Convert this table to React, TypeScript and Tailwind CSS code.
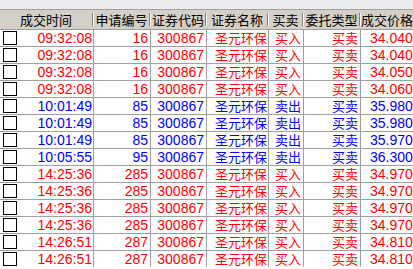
const rows = [
  { t: "09:32:08", no: "16", side: "买入", price: "34.0400", blue: false },
  { t: "09:32:08", no: "16", side: "买入", price: "34.0400", blue: false },
  { t: "09:32:08", no: "16", side: "买入", price: "34.0500", blue: false },
  { t: "09:32:08", no: "16", side: "买入", price: "34.0600", blue: false },
  { t: "10:01:49", no: "85", side: "卖出", price: "35.9800", blue: true },
  { t: "10:01:49", no: "85", side: "卖出", price: "35.9800", blue: true },
  { t: "10:01:49", no: "85", side: "卖出", price: "35.9700", blue: true },
  { t: "10:05:55", no: "95", side: "卖出", price: "36.3000", blue: true },
  { t: "14:25:36", no: "285", side: "买入", price: "34.9700", blue: false },
  { t: "14:25:36", no: "285", side: "买入", price: "34.9700", blue: false },
  { t: "14:25:36", no: "285", side: "买入", price: "34.9700", blue: false },
  { t: "14:25:36", no: "285", side: "买入", price: "34.9700", blue: false },
  { t: "14:26:51", no: "287", side: "买入", price: "34.8100", blue: false },
  { t: "14:26:51", no: "287", side: "买入", price: "34.8100", blue: false },
];

const headers = [
  { label: "成交时间", w: "w-[94px]" },
  { label: "申请编号", w: "w-[57px]" },
  { label: "证券代码", w: "w-[56px]" },
  { label: "证券名称", w: "w-[62px]" },
  { label: "买卖", w: "w-[35px]" },
  { label: "委托类型", w: "w-[57px]" },
  { label: "成交价格", w: "w-[52px]" },
];

function Sep() {
  return (
    <div className="flex h-[13px] shrink-0">
      <div className="w-px bg-[#808080]" />
      <div className="w-px bg-white" />
    </div>
  );
}

export default function App() {
  const font = { fontFamily: '"Liberation Sans", "Noto Sans CJK SC", sans-serif' };
  return (
    <div className="h-[269px] w-[413px] overflow-hidden bg-white" style={font}>
      <div className="h-[10px] border-b border-[#a0a0a0] bg-[#ececec]" />
      <div className="flex h-[19px] items-center bg-[#d4d0c8] text-[13px] text-black" style={{ fontFamily: '"Noto Sans CJK SC", sans-serif' }}>
        {headers.map((h, i) => (
          <div key={h.label} className={`flex h-full shrink-0 items-center ${h.w}`}>
            <span className="flex-1 whitespace-nowrap text-center leading-none">{h.label}</span>
            {i < headers.length - 1 && <Sep />}
          </div>
        ))}
      </div>
      {rows.map((r, i) => {
        const c = r.blue ? "text-[#0000ff]" : "text-[#ff0000]";
        return (
          <div key={i} className={`flex h-[17px] border-t border-[#a0a0a0] ${c}`}>
            <div className="flex w-[94px] shrink-0 items-center border-r border-[#a0a0a0] pl-[3px] pr-[1px]">
              <div className="h-[14px] w-[14px] border border-black bg-white" />
              <span className="flex-1 text-right text-[14px] leading-none">{r.t}</span>
            </div>
            <div className="flex w-[57px] shrink-0 items-center justify-end border-r border-[#a0a0a0] pr-[2px] text-[14px] leading-none">
              {r.no}
            </div>
            <div className="flex w-[56px] shrink-0 items-center justify-end border-r border-[#a0a0a0] pr-[2px] text-[14px] leading-none">
              300867
            </div>
            <div className="flex w-[62px] shrink-0 items-center justify-end border-r border-[#a0a0a0] pr-[1px] text-[13px] leading-none">
              圣元环保
            </div>
            <div className="flex w-[35px] shrink-0 items-center justify-end border-r border-[#a0a0a0] pr-[2px] text-[13px] leading-none">
              {r.side}
            </div>
            <div className="flex w-[57px] shrink-0 items-center justify-end border-r border-[#a0a0a0] pr-[2px] text-[13px] leading-none">
              买卖
            </div>
            <div className="flex shrink-0 items-center pl-[9px] text-[14px] leading-none whitespace-nowrap">
              {r.price}
            </div>
          </div>
        );
      })}
    </div>
  );
}
